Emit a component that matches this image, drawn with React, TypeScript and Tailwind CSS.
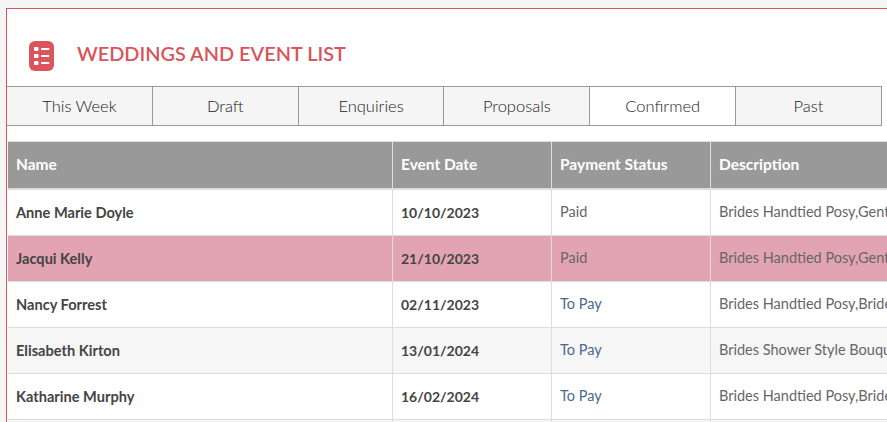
const tabs = ['This Week', 'Draft', 'Enquiries', 'Proposals', 'Confirmed', 'Past'];

const rows = [
  { name: 'Anne Marie Doyle', date: '10/10/2023', status: 'Paid', desc: 'Brides Handtied Posy,Gents Buttonhole,Bridesmaids Posy' },
  { name: 'Jacqui Kelly', date: '21/10/2023', status: 'Paid', desc: 'Brides Handtied Posy,Gents Buttonhole,Bridesmaids Posy', highlight: true },
  { name: 'Nancy Forrest', date: '02/11/2023', status: 'To Pay', desc: 'Brides Handtied Posy,Bridesmaids Posy,Gents Buttonhole' },
  { name: 'Elisabeth Kirton', date: '13/01/2024', status: 'To Pay', desc: 'Brides Shower Style Bouquet,Bridesmaids Posy,Gents Buttonhole', striped: true },
  { name: 'Katharine Murphy', date: '16/02/2024', status: 'To Pay', desc: 'Brides Handtied Posy,Bridesmaids Posy,Gents Buttonhole' },
  { name: 'Sarah Nolan', date: '01/03/2024', status: 'To Pay', desc: 'Brides Handtied Posy,Bridesmaids Posy', striped: true },
];

function ListIcon() {
  return (
    <svg width="25" height="30" viewBox="0 0 25 30">
      <rect x="0" y="0" width="25" height="30" rx="6" fill="#d9555b" />
      <rect x="5" y="6" width="4.5" height="4" rx="1" fill="#fff" />
      <rect x="5" y="13" width="4.5" height="4" rx="1" fill="#fff" />
      <rect x="5" y="20" width="4.5" height="4" rx="1" fill="#fff" />
      <rect x="12" y="7" width="8.5" height="2" rx="1" fill="#fff" />
      <rect x="12" y="14" width="8.5" height="2" rx="1" fill="#fff" />
      <rect x="12" y="21" width="8.5" height="2" rx="1" fill="#fff" />
    </svg>
  );
}

export default function App() {
  return (
    <div className="h-[422px] w-[887px] overflow-hidden bg-[#f5f5f5] pt-2 pl-1.5 font-['Lato',sans-serif]">
      <div className="h-[500px] w-[1100px] border border-[#d9555b] bg-white">
        <div className="flex h-[77px] items-end pb-[15px] pl-[22px]">
          <ListIcon />
          <h1 className="mb-[3px] ml-[23px] text-[19.9px] leading-[30px] font-semibold text-[#d9555b]">WEDDINGS AND EVENT LIST</h1>
        </div>
        <div className="flex h-10 w-[875px] border border-l-0 border-[#999]">
          {tabs.map((tab) => (
            <div
              key={tab}
              className={`flex flex-1 items-center justify-center border-r border-[#999] text-[16.5px] font-light text-[#222] last:border-r-0 ${tab === 'Confirmed' ? 'bg-white' : 'bg-[#f5f5f5]'}`}
            >
              {tab}
            </div>
          ))}
        </div>
        <div className="mt-[15px] ml-px h-px w-[1090px] bg-[#ddd]" />
        <table className="ml-px w-[1090px] table-fixed border-separate border-spacing-0">
          <colgroup>
            <col className="w-[385px]" />
            <col className="w-[159px]" />
            <col className="w-[159px]" />
            <col />
          </colgroup>
          <thead>
            <tr className="bg-[#999] text-left text-[15.5px] font-bold text-white">
              <th className="h-[48px] border-r border-b-2 border-r-[#ddd] border-b-[#ddd] px-2">Name</th>
              <th className="h-[48px] border-r border-b-2 border-r-[#ddd] border-b-[#ddd] px-2">Event Date</th>
              <th className="h-[48px] border-r border-b-2 border-r-[#ddd] border-b-[#ddd] px-2">Payment Status</th>
              <th className="h-[48px] border-b-2 border-b-[#ddd] px-2">Description</th>
            </tr>
          </thead>
          <tbody>
            {rows.map((row) => (
              <tr key={row.name} className={row.highlight ? 'bg-[#e2a4b2]' : row.striped ? 'bg-[#f6f6f6]' : 'bg-white'}>
                <td className="h-[46px] border-r border-b border-[#ddd] px-2 text-[14.6px] font-bold text-[#444]">{row.name}</td>
                <td className="h-[46px] border-r border-b border-[#ddd] px-2 pb-[1px] text-[14px] font-bold text-[#444]">{row.date}</td>
                <td className={`h-[46px] border-r border-b border-[#ddd] px-2 pb-[1px] text-[14.5px] ${row.status === 'Paid' ? 'text-[#666]' : 'text-[#4a6a8a]'}`}>{row.status}</td>
                <td className="h-[46px] truncate border-b border-[#ddd] px-2 pb-[1px] text-[14.5px] text-[#666]">{row.desc}</td>
              </tr>
            ))}
          </tbody>
        </table>
      </div>
    </div>
  );
}
